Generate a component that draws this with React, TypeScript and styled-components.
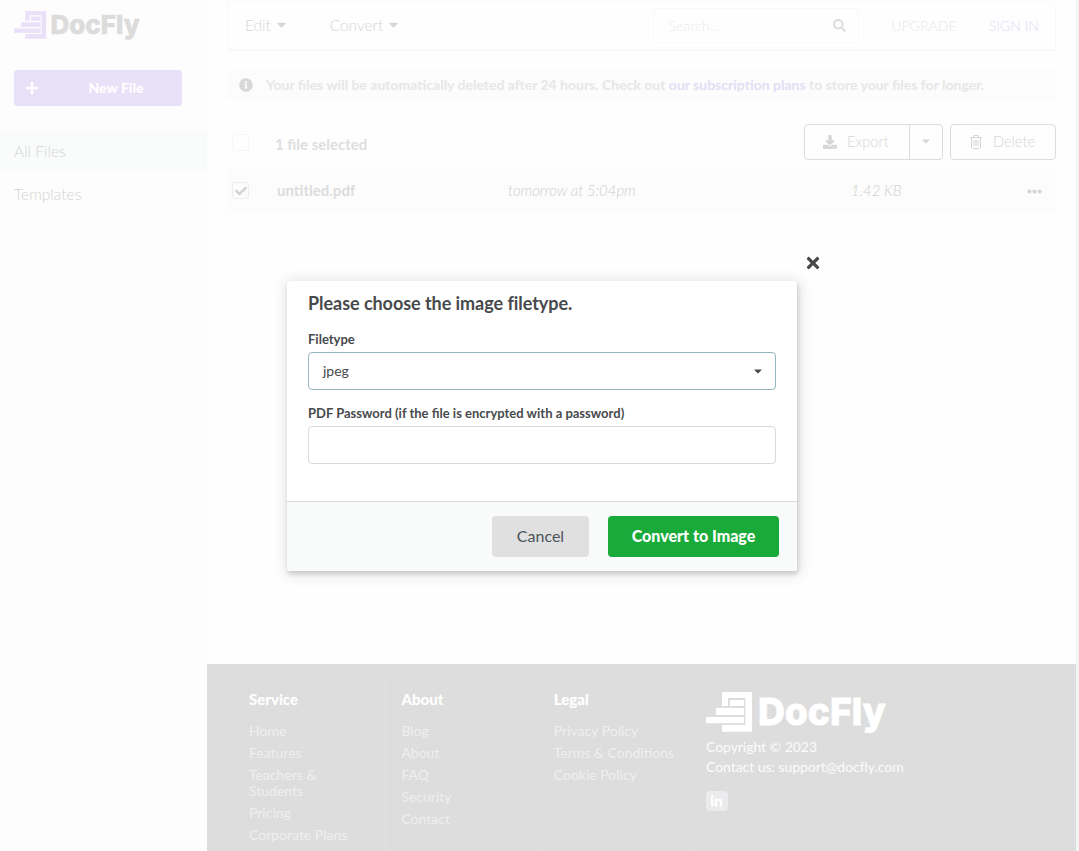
import React from "react";
import styled, { createGlobalStyle } from "styled-components";
import {
  FaCaretDown,
  FaCheck,
  FaDownload,
  FaEllipsisH,
  FaInfoCircle,
  FaLinkedinIn,
  FaPlus,
  FaSearch,
  FaTimes,
} from "react-icons/fa";

const GlobalStyle = createGlobalStyle`
  * { box-sizing: border-box; }
  body { margin: 0; background: #fefefe; font-family: Lato, "Liberation Sans", sans-serif; }
  svg { display: block; flex: none; }
`;

const Page = styled.div`
  position: relative;
  display: grid;
  grid-template-columns: 207px 1fr 3px;
  height: 851px;
  overflow: hidden;
  white-space: nowrap;
`;

const Sidebar = styled.aside`
  background: #fdfdfd;
  padding-top: 11px;
`;

const SidebarLogo = styled.div`
  padding-left: 14px;
  height: 59px;
`;

const NewFileButton = styled.button`
  display: flex;
  align-items: center;
  width: 168px;
  height: 36px;
  margin: 0 0 24px 14px;
  padding: 0 0 1px 11px;
  border: 0;
  border-radius: 3px;
  background: #e8e1f8;
  color: #fff;
  font: 900 14px Lato, sans-serif;
`;

const NewFileLabel = styled.span`
  flex: 1;
  padding-left: 11px;
  text-align: center;
`;

const NavItem = styled.a<{ $active?: boolean }>`
  display: block;
  height: 42px;
  margin-bottom: 1px;
  padding-left: 14px;
  background: ${(p) => (p.$active ? "#fafcfc" : "transparent")};
  color: #d4d4d4;
  font-size: 15.6px;
  font-weight: 300;
  line-height: 42px;
`;

const Main = styled.main`
  display: flex;
  flex-direction: column;
`;

const Content = styled.div`
  flex: none;
  height: 664px;
  padding: 1px 20px 0;
`;

const TopBar = styled.header`
  display: flex;
  align-items: center;
  height: 50px;
  padding: 0 16px 0 17px;
  border: 1px solid #f9f9f9;
  border-bottom: 2px solid #f8f8f8;
  border-radius: 4px;
  color: #d6d6d6;
  font-size: 15.4px;
  font-weight: 300;
`;

const MenuLink = styled.a<{ $gap: number }>`
  display: flex;
  align-items: center;
  gap: 3px;
  height: 20px;
  margin: 0 ${(p) => p.$gap}px 2px 0;
`;

const SearchBox = styled.div`
  display: flex;
  align-items: center;
  justify-content: space-between;
  width: 206px;
  height: 35px;
  margin-left: auto;
  padding: 0 12px 0 14px;
  border: 1px solid #f9f9f9;
  border-radius: 4px;
  color: #dedede;
  font-size: 14.4px;
`;

const Placeholder = styled.span`
  color: #ededed;
`;

const AccountLink = styled.a<{ $accent?: boolean; $gap: number }>`
  margin-left: ${(p) => p.$gap}px;
  color: ${(p) => (p.$accent ? "#e2ddf6" : "#e8e8e8")};
  font-size: 14.1px;
`;

const Notice = styled.div`
  display: flex;
  align-items: center;
  gap: 13px;
  height: 30px;
  margin-top: 19px;
  padding-left: 12px;
  background: #fcfcfc;
  color: #e7e7e7;
  font-size: 14px;
  font-weight: 700;

  svg { color: #d8d8d8; }
  a { color: #e3def4; }
  span { margin-bottom: 2px; }
`;

const Toolbar = styled.div`
  display: flex;
  align-items: center;
  height: 36px;
  margin-top: 24px;
`;

const Checkbox = styled.span`
  display: flex;
  align-items: center;
  justify-content: center;
  flex: none;
  width: 17px;
  height: 17px;
  margin-left: 5px;
  border: 1px solid #f6f6f6;
  border-radius: 3px;
  color: #d3d3d3;
`;

const RowCheckbox = styled(Checkbox)`
  margin-bottom: 1px;
  border-color: #ededed;
`;

const SelectionLabel = styled.span`
  flex: 1;
  padding: 4px 0 0 26px;
  color: #dedede;
  font-size: 15px;
  font-weight: 700;
`;

const ActionButton = styled.button<{ $width: number }>`
  display: flex;
  align-items: center;
  gap: 10px;
  width: ${(p) => p.$width}px;
  height: 36px;
  padding: 0 0 1px 18px;
  border: 1px solid #dcdcdc;
  border-radius: 4px;
  background: transparent;
  color: #d6d6d6;
  font: 300 14.6px Lato, sans-serif;
`;

const ExportButton = styled(ActionButton)`
  border-radius: 4px 0 0 4px;
`;

const ExportToggle = styled(ActionButton)`
  justify-content: center;
  margin: 0 7px 0 -1px;
  padding: 0 1px 2px 0;
  border-radius: 0 4px 4px 0;
`;

const FileRow = styled.div`
  display: grid;
  grid-template-columns: 50px 231px 343px 176px 1fr;
  align-items: center;
  height: 44px;
  margin-top: 9px;
  background: #fcfcfc;
  color: #d6d6d6;
  font-size: 15px;
`;

const FileName = styled.strong`
  margin-bottom: 2px;
  font-weight: 700;
  color: #dcdcdc;
`;

const FileMeta = styled.em`
  margin-bottom: 2px;
  font-size: 14.9px;
  font-style: italic;
  font-weight: 300;
  color: #cfcfcf;
`;

const Footer = styled.footer`
  flex: 1;
  display: flex;
  padding: 14px 0 0 27px;
  background: #ddd;
  color: #efefef;
  font-size: 14px;
`;

const FooterColumn = styled.section`
  width: 152.4px;
  padding: 13px 12px 0 15px;
  border-right: 1px solid #e1e1e1;
`;

const FooterTitle = styled.h4`
  margin: 0 0 16px;
  color: #fff;
  font-size: 15px;
  font-weight: 900;
  line-height: 16px;
`;

const FooterLink = styled.a<{ $wrap?: boolean }>`
  display: block;
  width: ${(p) => (p.$wrap ? "90px" : "auto")};
  margin-bottom: 6px;
  line-height: 16px;
  white-space: ${(p) => (p.$wrap ? "normal" : "nowrap")};
`;

const FooterBrand = styled.section`
  padding: 14px 0 0 14.8px;
  color: #fcfcfc;
  line-height: 20px;
  letter-spacing: -0.05px;
`;

const LogoSlot = styled.div`
  height: 45px;
`;

const Social = styled.a`
  display: flex;
  align-items: center;
  justify-content: center;
  width: 22px;
  height: 20px;
  margin-top: 14px;
  border-radius: 4px;
  background: #ebebed;
  color: #fff;
`;

const ScrollTrack = styled.div`
  background: #f3f3f3;
`;

const Dialog = styled.div`
  position: absolute;
  left: 287px;
  top: 281px;
  width: 510px;
  height: 290px;
  display: flex;
  flex-direction: column;
  border-radius: 3px;
  background: #fff;
  box-shadow: 1px 3px 4px rgba(0, 0, 0, 0.14), 1px 2px 14px 2px rgba(0, 0, 0, 0.12);
  color: #474a4c;
`;

const CloseButton = styled.button`
  position: absolute;
  left: 517px;
  top: -27px;
  padding: 0;
  border: 0;
  background: none;
  color: #484848;
`;

const DialogBody = styled.div`
  height: 220px;
  padding: 10px 21px 0;
`;

const DialogTitle = styled.h2`
  margin: 0 0 14px;
  font-size: 18px;
  font-weight: 700;
  line-height: 24px;
  letter-spacing: -0.05px;
`;

const FieldLabel = styled.label`
  display: block;
  margin-bottom: 3px;
  font-size: 13px;
  font-weight: 700;
  line-height: 20px;
`;

const Field = styled.div<{ $focused?: boolean }>`
  display: flex;
  align-items: center;
  justify-content: space-between;
  height: 38px;
  margin-bottom: 13px;
  padding: 0 11px 1px 14px;
  border: 1px solid ${(p) => (p.$focused ? "#96b4c1" : "#dadadb")};
  border-radius: 4px;
  font-size: 14px;
`;

const FieldValue = styled.span`
  padding-bottom: 1px;
`;

const DialogActions = styled.div`
  flex: 1;
  display: flex;
  align-items: center;
  justify-content: flex-end;
  gap: 19px;
  padding-right: 18px;
  border-top: 1px solid #d9dcdd;
  border-radius: 0 0 3px 3px;
  background: #f9fbfb;
`;

const DialogButton = styled.button<{ $primary?: boolean }>`
  width: ${(p) => (p.$primary ? 171 : 97)}px;
  height: 41px;
  padding: 0 0 2px;
  border: 0;
  border-radius: 4px;
  background: ${(p) => (p.$primary ? "#18ab3a" : "#e0e0e0")};
  color: ${(p) => (p.$primary ? "#fff" : "#4a5459")};
  font: ${(p) => (p.$primary ? 900 : 400)} 16px Lato, sans-serif;
`;

function Logo({ width, mark, text }: { width: number; mark: string; text: string }) {
  return (
    <svg
      width={width + 6}
      height={(width * 44) / 180}
      viewBox={`0 0 ${((width + 6) * 180) / width} 44`}
      overflow="visible"
      aria-label="DocFly"
    >
      <g fill={mark}>
        <path d="M16 0H46V39.7H16V33H39.3V6H22V14H16Z" />
        <rect x="24" y="8" width="14" height="6" />
        <rect x="10" y="16" width="28" height="7" />
        <rect x="0" y="25" width="38" height="6.2" />
      </g>
      <text
        x="52"
        y="33.3"
        fill={text}
        stroke={text}
        strokeWidth="0.8"
        fontFamily="Inter, sans-serif"
        fontWeight="800"
        fontSize="37.5"
        textLength="127.6"
        lengthAdjust="spacingAndGlyphs"
      >
        DocFly
      </text>
    </svg>
  );
}

function TrashIcon() {
  return (
    <svg width="14" height="14" viewBox="0 0 14 14" fill="none" stroke="currentColor">
      <path d="M1 2.5H13M4.5 2.5V.5H9.5V2.5M2.5 2.5V12.2Q2.5 13.5 3.8 13.5H10.2Q11.5 13.5 11.5 12.2V2.5M5 5V11M7 5V11M9 5V11" />
    </svg>
  );
}

const columns = [
  { title: "Service", links: ["Home", "Features", "Teachers & Students", "Pricing", "Corporate Plans"] },
  { title: "About", links: ["Blog", "About", "FAQ", "Security", "Contact"] },
  { title: "Legal", links: ["Privacy Policy", "Terms & Conditions", "Cookie Policy"] },
];

export default function App() {
  return (
    <Page>
      <GlobalStyle />
      <Sidebar>
        <SidebarLogo>
          <Logo width={126} mark="#e8e1f8" text="#dcdcdc" />
        </SidebarLogo>
        <NewFileButton>
          <FaPlus size={14} />
          <NewFileLabel>New File</NewFileLabel>
        </NewFileButton>
        <NavItem $active>All Files</NavItem>
        <NavItem>Templates</NavItem>
      </Sidebar>

      <Main>
        <Content>
          <TopBar>
            <MenuLink $gap={41}>
              Edit <FaCaretDown size={15} />
            </MenuLink>
            <MenuLink $gap={0}>
              Convert <FaCaretDown size={15} />
            </MenuLink>
            <SearchBox>
              <Placeholder>Search...</Placeholder>
              <FaSearch size={13} />
            </SearchBox>
            <AccountLink $gap={32}>UPGRADE</AccountLink>
            <AccountLink $gap={32} $accent>
              SIGN IN
            </AccountLink>
          </TopBar>

          <Notice>
            <FaInfoCircle size={14} />
            <span>
              Your files will be automatically deleted after 24 hours. Check out <a>our subscription plans</a> to store
              your files for longer.
            </span>
          </Notice>

          <Toolbar>
            <Checkbox />
            <SelectionLabel>1 file selected</SelectionLabel>
            <ExportButton $width={106}>
              <FaDownload size={14} />
              Export
            </ExportButton>
            <ExportToggle $width={34}>
              <FaCaretDown size={12} />
            </ExportToggle>
            <ActionButton $width={106}>
              <TrashIcon />
              Delete
            </ActionButton>
          </Toolbar>

          <FileRow>
            <RowCheckbox>
              <FaCheck size={12} />
            </RowCheckbox>
            <FileName>untitled.pdf</FileName>
            <FileMeta>tomorrow at 5:04pm</FileMeta>
            <FileMeta>1.42 KB</FileMeta>
            <FaEllipsisH size={15} />
          </FileRow>
        </Content>

        <Footer>
          {columns.map((column) => (
            <FooterColumn key={column.title}>
              <FooterTitle>{column.title}</FooterTitle>
              {column.links.map((link) => (
                <FooterLink key={link} $wrap={link.startsWith("Teachers")}>
                  {link}
                </FooterLink>
              ))}
            </FooterColumn>
          ))}
          <FooterBrand>
            <LogoSlot>
              <Logo width={180} mark="#fff" text="#fff" />
            </LogoSlot>
            <div>Copyright © 2023</div>
            <div>Contact us: support@docfly.com</div>
            <Social>
              <FaLinkedinIn size={13} />
            </Social>
          </FooterBrand>
        </Footer>
      </Main>
      <ScrollTrack />

      <Dialog role="dialog">
        <CloseButton aria-label="Close">
          <FaTimes size={18} />
        </CloseButton>
        <DialogBody>
          <DialogTitle>Please choose the image filetype.</DialogTitle>
          <FieldLabel>Filetype</FieldLabel>
          <Field $focused>
            <FieldValue>jpeg</FieldValue> <FaCaretDown size={12} />
          </Field>
          <FieldLabel>PDF Password (if the file is encrypted with a password)</FieldLabel>
          <Field />
        </DialogBody>
        <DialogActions>
          <DialogButton>Cancel</DialogButton>
          <DialogButton $primary>Convert to Image</DialogButton>
        </DialogActions>
      </Dialog>
    </Page>
  );
}
